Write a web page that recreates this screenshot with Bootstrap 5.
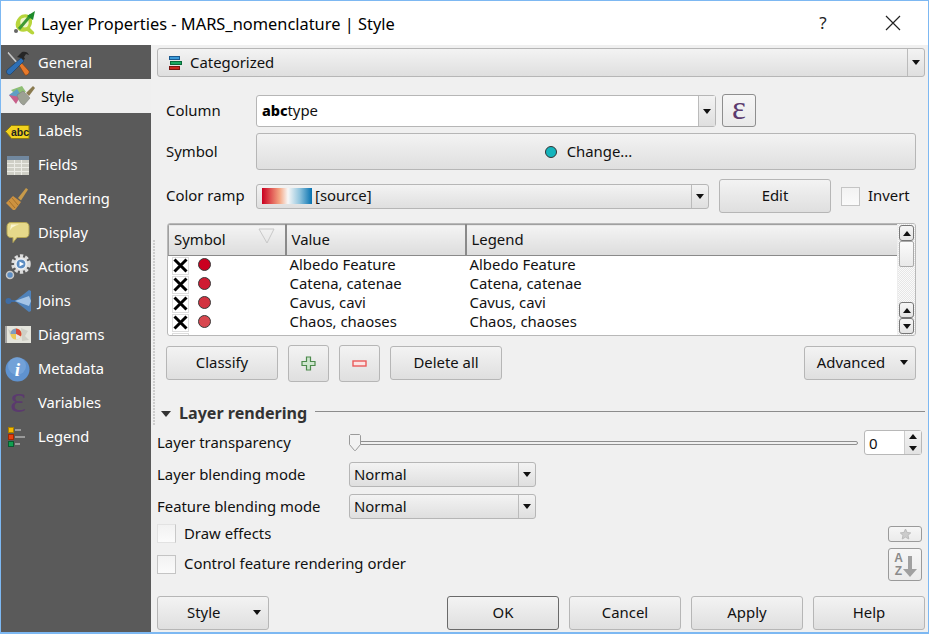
<!DOCTYPE html>
<html lang="en">
<head>
<meta charset="utf-8">
<title>Layer Properties</title>
<link href="https://cdn.jsdelivr.net/npm/bootstrap@5.3.0/dist/css/bootstrap.min.css" rel="stylesheet">
<style>
html,body{height:100%;margin:0;overflow:hidden}
body{background:#f0f0f0;font-family:"Noto Sans","Open Sans","Liberation Sans",sans-serif;font-size:14.9px;color:#111;line-height:1.2}
.win{width:929px;height:634px;border:1px solid #7db8f2;border-bottom-width:2px;display:flex;flex-direction:column;background:#f0f0f0}
.titlebar{height:44px;background:#fff;flex:none;padding-left:12px}
.titletext{font-size:16.4px;margin-left:4px;margin-top:1px;color:#000}
.winbtn{width:70px;height:44px;display:flex;align-items:center;justify-content:center;color:#222}
.qmark{font-size:17px}
.bodyarea{flex:1;min-height:0}
.side{width:150px;background:#5a5a5a;flex:none;border-radius:0}
.side .list-group-item{height:34px;background:#5a5a5a;border:0;color:#fff;padding:2px 0 0 4px;display:flex;align-items:center;gap:8px;border-radius:0;font-size:14.7px}
.side .list-group-item svg{flex:none;overflow:visible}
.side .list-group-item.sel{background:#efefef;color:#000;padding-left:7px;gap:8px}
.side .list-group-item .wd26{margin-right:-1px}
.side .list-group-item .wd28{margin-right:-3px}
.mainp{flex:1;min-width:0;padding:3px 3px 2px 6px;position:relative}
.mainp::before{content:"";position:absolute;left:2px;top:195px;height:185px;width:2px;background:repeating-linear-gradient(#cdcdcd 0 2px,transparent 2px 3px)}
.grad{background:linear-gradient(#f3f3f3,#dfdfdf);border:1px solid #b6b6b6;border-radius:3px;color:#111}
.qbtn{--bs-btn-padding-x:0;--bs-btn-padding-y:0;--bs-btn-font-size:14.9px;--bs-btn-line-height:1.2;--bs-btn-border-radius:3px;background:linear-gradient(#f3f3f3,#dfdfdf);border:1px solid #b6b6b6;color:#111;display:flex;align-items:center;justify-content:center;flex:none}
.qbtn:hover{background:linear-gradient(#f3f3f3,#dfdfdf);border-color:#b6b6b6;color:#111}
.w112{width:112px;height:34px}
.catcombo{height:29px;display:flex;align-items:center}
.catcombo .lbl{flex:1;padding-left:11px;display:flex;align-items:center;gap:8px}
.dropcell{width:17px;align-self:stretch;border-left:1px solid #bbb;display:flex;align-items:center;justify-content:center;flex:none}
.tri{width:0;height:0;border-left:4.5px solid transparent;border-right:4.5px solid transparent;border-top:5px solid #111;display:block}
.triup{border-top:0;border-bottom:5px solid #111}
.sect{padding:0 9px}
.flabel{width:90px;flex:none}
.r1{margin-top:17px;height:33px}
.colbox{width:460px;height:32px;margin-top:1px;background:#fff;border:1px solid #b6b6b6;border-radius:3px;display:flex;align-items:center}
.abc{font-weight:800;font-size:14.5px;margin-left:5px;letter-spacing:-.1px;color:#000}
.colbox .dropcell{background:linear-gradient(#f3f3f3,#dfdfdf)}
.epsbtn{width:34px;height:33px;margin-left:6px;border-color:#8e8e8e;background:linear-gradient(#f6f6f6,#e9e9e9)}
.eps{font-family:"Liberation Serif",serif;font-size:33px;color:#5b3a6e;line-height:24px;height:24px;margin-top:-6px}
.r2{margin-top:6px;height:37px}
.symbtn{width:660px;height:37px;gap:10px;padding-left:5px !important}
.dot{width:12px;height:12px;border-radius:50%;background:#14b4bc;border:1px solid #333;display:block;flex:none}
.r3{margin-top:9px;height:34px}
.rampcombo{width:453px;height:25px;display:flex;align-items:center}
.rampcombo .lbl{flex:1;display:flex;align-items:center;padding-left:5px;gap:3px}
.ramp{width:50px;height:16px;background:linear-gradient(90deg,#ca0020,#f4a582 35%,#f7f7f7 52%,#92c5de 75%,#0571b0);display:block}
.editbtn{margin-left:10px}
.chk{width:19px;height:19px;background:linear-gradient(#f2f2f2,#fbfbfb);border:1px solid #c4c4c4;display:block;flex:none}
.chk.faint{border-color:#e2e2e2 #c8c8c8 #e2e2e2 #e2e2e2}
.invert{margin-left:10px;gap:8px}
.tablewrap{margin-top:10px;margin-left:1px;height:113px;border:1px solid #b8b8b8;border-radius:3px;background:#fff;position:relative;overflow:hidden;display:flex}
.tscroll{flex:1;min-width:0;overflow:hidden}
.qtab{margin:0;width:730px;table-layout:fixed;--bs-table-bg:transparent;font-size:14.9px;color:#111}
.qtab th{height:31px;font-weight:400;padding:0 0 0 5px;background:linear-gradient(#f4f4f4,#dcdcdc);border:0;border-top:1px solid #a0a0a0;border-right:2px solid #8a8a8a;border-bottom:1px solid #8a8a8a;vertical-align:middle;position:relative}
.qtab th:first-child{border-left:1px solid #a0a0a0}
.qtab td{height:19px;padding:0;border:0;vertical-align:top;line-height:17px;background:#fff}
.cellwrap{display:flex;align-items:center;height:19px;padding-left:3px;gap:9px}
.xbox{width:17px;height:18px;background:#fff;border:1px solid #ddd;display:flex;align-items:center;justify-content:center;flex:none}
.swdot{width:13px;height:13px;border-radius:50%;border:1px solid #3a3a3a;display:block;margin-top:-3px}
.vcell{padding-left:4px !important}
.sortmark{position:absolute;right:10px;top:3px}
.sbar{width:18px;flex:none;display:flex;flex-direction:column;background:repeating-conic-gradient(#e6e6e6 0 25%,#fafafa 0 50%) 0 0/2px 2px;border-left:1px solid #eee;padding:1px}
.sb{height:16px;flex:none;background:linear-gradient(#f6f6f6,#e4e4e4);border:1px solid #777;border-radius:3px;display:flex;align-items:center;justify-content:center}
.sthumb{height:26px;flex:none;background:linear-gradient(#fbfbfb,#e9e9e9);border:1px solid #aaa;border-radius:2px}
.sfill{flex:1}
.r5{margin-top:9px;height:37px;align-items:flex-start}
.r5 .w112{margin-top:1px}
.smbtn{width:41px;height:37px}
.ml10{margin-left:10px}
.advbtn{padding-right:18px !important}
.r6{margin-top:20px;height:24px}
.secttitle{font-weight:700;font-size:16.1px;color:#333;margin:0 8px 0 8px;white-space:nowrap}
.secttri{margin-left:4px;border-left-width:5.5px;border-right-width:5.5px;border-top-width:6px;border-top-color:#333}
.sectline{flex:1;height:1px;background:#8c8c8c;margin-top:-5px}
.r7{margin-top:7px;height:25px}
.r6 + .r7{margin-top:4px}
.mr3{margin-right:3px}
.l192{width:192px;flex:none}
.slider{flex:1;position:relative;height:17px;display:flex;align-items:center;margin-right:6px}
.groove{display:block;width:100%;height:4px;border:1px solid #8f8f8f;border-radius:2px;background:#f0f0f0}
.handle{position:absolute;left:0;top:0}
.spin{width:58px;height:25px;background:#fff;border:1px solid #b8b8b8;border-radius:3px;display:flex;flex:none}
.spin .sv{flex:1;padding-left:4px;align-self:center;font-size:15px}
.spin .ss{width:17px;border-left:1px solid #ccc;display:flex;flex-direction:column;background:linear-gradient(#f3f3f3,#e2e2e2)}
.spin .ss i{flex:1;display:flex;align-items:center;justify-content:center}
.nbox{width:187px;height:25px;display:flex;align-items:center}
.nbox .lbl{flex:1;padding-left:4px}
.r10{margin-top:5px;height:19px}
.r11{margin-top:5px;height:33px}
.r11 .gapchk{margin-bottom:1px}
.gapchk{gap:8px}
.starbtn{width:34px;height:16px;margin-top:2px;background:linear-gradient(#f6f6f6,#ebebeb);border-color:#9a9a9a}
.azbtn{width:34px;height:33px;background:linear-gradient(#f6f6f6,#ebebeb);border-color:#9a9a9a}
.foot{margin-top:15px;height:34px;gap:10px}
.okbtn{border-color:#6a6a6a}
.stylebtn{justify-content:flex-start;padding-left:29px !important;position:relative}
.mtri{position:absolute;right:7px;top:13px}
</style>
</head>
<body>
<div class="win">
  <div class="titlebar d-flex align-items-center">
    <svg width="24" height="26" viewBox="0 0 24 26"><path d="M6 7c4-4 10-3 12 0 2 4 1 8-1 11l4 4c1 2-1 3-3 2l-4-3c-5 2-9 0-11-4-1-3 0-7 3-10z" fill="#b8d53c"/><path d="M8 9c3-2 6-2 7 0 1 3 1 6-1 8-3 1-5 0-6-2-1-2-1-4 0-6z" fill="#f1f6cf"/><path d="M6 19L18 5" stroke="#3f9a34" stroke-width="3"/><path d="M14 6l8-5-2 9z" fill="#1d8a2a"/><circle cx="3" cy="21" r="2" fill="#666"/></svg>
    <span class="titletext">Layer Properties - MARS_nomenclature | Style</span>
    <span class="ms-auto winbtn qmark">?</span>
    <span class="winbtn"><svg width="16" height="16" viewBox="0 0 16 16"><path d="M1 1l14 14M15 1L1 15" stroke="#222" stroke-width="1.2"/></svg></span>
  </div>
  <div class="bodyarea d-flex">
    <div class="side list-group list-group-flush">
      <div class="list-group-item">
        <svg width="25" height="25" viewBox="0 0 25 25"><path d="M2 2l1.500-1.500 9 10-1.500 2z" fill="#c4c4c4" stroke="#444" stroke-width=".6"/><path d="M12 11l2-2 10 11c1 2-2 5-4 4z" fill="#e8792a" stroke="#7a3c10" stroke-width=".6"/><path d="M12 6l5-5c3-1 6 0 7 3l-3-1-2 3 1 2-2 1-2-2z" fill="#262626"/><path d="M16 7l3 3L6 23c-2 2-6-1-4-4z" fill="#2e6fb5" stroke="#173a60" stroke-width=".6"/></svg>
        General</div>
      <div class="list-group-item sel">
        <svg class="wd26" width="26" height="26" viewBox="0 0 26 26"><path d="M3 6l11-4 4 6-9 4z" fill="#8fbf74"/><path d="M1 11l8-6 4 6-7 5z" fill="#5f9fc4"/><path d="M1 11l11 2-4 7z" fill="#c8608a"/><path d="M9 11l6-4 7 7-6 7c-3 0-6-6-7-10z" fill="#9da194" stroke="#777" stroke-width=".5"/><path d="M18 9l7-7 2 2-6 8z" fill="#8a7b50"/></svg>
        Style</div>
      <div class="list-group-item">
        <svg width="25" height="25" viewBox="0 0 25 25"><path d="M.5 12.500l6-6h17.500v13H6.500z" fill="#f2d21e" stroke="#8c7a10"/><text x="15" y="16.500" font-family="Liberation Sans" font-weight="700" font-size="10.5" fill="#222" text-anchor="middle">abc</text></svg>
        Labels</div>
      <div class="list-group-item">
        <svg width="25" height="25" viewBox="0 0 25 25"><rect x="2" y="3" width="22" height="19" fill="#cfcfc6"/><rect x="2" y="3" width="22" height="4" fill="#71889f"/><path d="M2 10.500h22M2 14.500h22M2 18.500h22M9.500 7v15M16.500 7v15" stroke="#ecece6"/></svg>
        Fields</div>
      <div class="list-group-item">
        <svg width="25" height="25" viewBox="0 0 25 25"><path d="M13 11l8-10 2 1.500-7 11z" fill="#c79a4a"/><path d="M8 9l8 6-6 8-2 0-7-7z" fill="#cd9240"/><path d="M4 14l6 7M7 11l6 7" stroke="#a5702a"/></svg>
        Rendering</div>
      <div class="list-group-item">
        <svg width="25" height="25" viewBox="0 0 25 25"><path d="M6 1.500h14c3 0 4 2 4 4v7c0 3-2 4-4 4h-8l-4 5v-5H6c-3 0-4-2-4-4v-7c0-2 1-4 4-4z" fill="#e6d98a" stroke="#b5a654"/><path d="M6 3.500h8c-3 1-7 2-9 6z" fill="#fbf6cf"/></svg>
        Display</div>
      <div class="list-group-item">
        <svg class="wd26" width="26" height="26" viewBox="0 0 26 26"><circle cx="16" cy="10" r="8" fill="none" stroke="#dcdcdc" stroke-width="3.5" stroke-dasharray="3.200 2"/><circle cx="16" cy="10" r="7" fill="#e4e4e4"/><circle cx="16" cy="10" r="5" fill="#5d8dc2" stroke="#fff"/><path d="M14.500 7.500l4.500 2.500-4.500 2.500z" fill="#fff"/><circle cx="5" cy="21" r="3.500" fill="#5d8dc2" stroke="#c8c8c8" stroke-width="1.500"/></svg>
        Actions</div>
      <div class="list-group-item">
        <svg class="wd28" width="28" height="25" viewBox="0 0 28 25"><circle cx="3.500" cy="12" r="3" fill="#3f6ca3"/><path d="M4 12h8" stroke="#3f6ca3" stroke-width="2"/><path d="M10 12L24 1l2 1v20l-2 1z" fill="#4f82ba"/><path d="M10 12L24 7l2 5-2 5z" fill="#a4c4e6"/></svg>
        Joins</div>
      <div class="list-group-item">
        <svg class="wd26" width="26" height="22" viewBox="0 0 26 22"><rect x="1" y="2" width="25" height="17" fill="#e4e4dc"/><path d="M1 2v17" stroke="#a5a5a5" stroke-width="2"/><path d="M16 4l7 3-3 5 4 4-7 1zM3 5l4 3-2 3z" fill="#cfcfc6"/><circle cx="11" cy="10" r="5.500" fill="#e9c85a"/><path d="M11 10V4.500a5.500 5.500 0 0 1 4.800 8z" fill="#d84a3a"/><path d="M11 10l4.800 2.500a5.500 5.500 0 0 1-4.800 3z" fill="#e7e7e7"/><path d="M11 10V4.500A5.500 5.500 0 0 0 5.500 10z" fill="#7f9cc0"/></svg>
        Diagrams</div>
      <div class="list-group-item">
        <svg width="25" height="25" viewBox="0 0 25 25"><circle cx="12.500" cy="12.500" r="12" fill="#5f92cf"/><circle cx="12" cy="9" r="9" fill="#7fabdd" opacity=".6"/><text x="12.500" y="19" font-family="Liberation Serif" font-style="italic" font-weight="700" font-size="19" fill="#fff" text-anchor="middle">i</text></svg>
        Metadata</div>
      <div class="list-group-item">
        <svg width="25" height="25" viewBox="0 0 25 25"><text x="13" y="21" font-family="Liberation Serif" font-size="38" fill="#5b3a6e" text-anchor="middle">ε</text></svg>
        Variables</div>
      <div class="list-group-item">
        <svg width="25" height="25" viewBox="0 0 25 25"><rect x="3.500" y="2.500" width="5" height="5" fill="#f5b800" stroke="#a88000"/><rect x="3.500" y="9.500" width="5" height="5" fill="#e84010" stroke="#a02800"/><rect x="3.500" y="16.500" width="5" height="5" fill="#10a050" stroke="#0a5a30"/><path d="M10 5h6M10 12h10M10 19h5" stroke="#9a9a9a" stroke-width="2"/></svg>
        Legend</div>
    </div>
    <div class="mainp d-flex flex-column">
      <div class="grad catcombo">
        <div class="lbl">
          <svg width="13" height="14" viewBox="0 0 13 14"><rect x=".5" y=".5" width="10" height="3" fill="#3a9ad9" stroke="#1a5a90"/><rect x="1.500" y="5.500" width="11" height="3" fill="#1aa860" stroke="#0a6a3a"/><rect x=".5" y="10.500" width="10" height="3" fill="#c8281e" stroke="#7a1610"/></svg>
          Categorized</div>
        <div class="dropcell"><span class="tri"></span></div>
      </div>
      <div class="sect">
        <div class="d-flex align-items-center r1">
          <span class="flabel">Column</span>
          <div class="colbox"><span class="abc">abc</span><span class="flex-grow-1">type</span><div class="dropcell"><span class="tri"></span></div></div>
          <button type="button" class="btn qbtn epsbtn"><span class="eps">ε</span></button>
        </div>
        <div class="d-flex align-items-center r2">
          <span class="flabel">Symbol</span>
          <button type="button" class="btn qbtn symbtn"><span class="dot"></span>Change...</button>
        </div>
        <div class="d-flex align-items-center r3">
          <span class="flabel">Color ramp</span>
          <div class="grad rampcombo"><div class="lbl"><span class="ramp"></span>[source]</div><div class="dropcell"><span class="tri"></span></div></div>
          <button type="button" class="btn qbtn w112 editbtn">Edit</button>
          <span class="d-flex align-items-center invert"><span class="chk"></span>Invert</span>
        </div>
        <div class="tablewrap">
          <div class="tscroll">
            <table class="table qtab">
              <colgroup><col style="width:117px"><col style="width:180px"><col style="width:433px"></colgroup>
              <thead><tr>
                <th>Symbol<svg class="sortmark" width="17" height="16" viewBox="0 0 17 16"><path d="M1 1h15L9 15z" fill="none" stroke="#c8c8c8"/></svg></th>
                <th>Value</th><th>Legend</th>
              </tr></thead>
              <tbody>
                <tr><td><div class="cellwrap"><span class="xbox"><svg width="15" height="15" viewBox="0 0 15 15"><path d="M1.500 1.500l12 12M13.500 1.500l-12 12" stroke="#000" stroke-width="3"/></svg></span><span class="swdot" style="background:#ca0020"></span></div></td><td class="vcell">Albedo Feature</td><td class="vcell">Albedo Feature</td></tr>
                <tr><td><div class="cellwrap"><span class="xbox"><svg width="15" height="15" viewBox="0 0 15 15"><path d="M1.500 1.500l12 12M13.500 1.500l-12 12" stroke="#000" stroke-width="3"/></svg></span><span class="swdot" style="background:#cf1b32"></span></div></td><td class="vcell">Catena, catenae</td><td class="vcell">Catena, catenae</td></tr>
                <tr><td><div class="cellwrap"><span class="xbox"><svg width="15" height="15" viewBox="0 0 15 15"><path d="M1.500 1.500l12 12M13.500 1.500l-12 12" stroke="#000" stroke-width="3"/></svg></span><span class="swdot" style="background:#d23240"></span></div></td><td class="vcell">Cavus, cavi</td><td class="vcell">Cavus, cavi</td></tr>
                <tr><td><div class="cellwrap"><span class="xbox"><svg width="15" height="15" viewBox="0 0 15 15"><path d="M1.500 1.500l12 12M13.500 1.500l-12 12" stroke="#000" stroke-width="3"/></svg></span><span class="swdot" style="background:#d8474f"></span></div></td><td class="vcell">Chaos, chaoses</td><td class="vcell">Chaos, chaoses</td></tr>
                <tr><td><div class="cellwrap"><span class="xbox"></span></div></td><td></td><td></td></tr>
              </tbody>
            </table>
          </div>
          <div class="sbar">
            <div class="sb"><span class="tri triup"></span></div>
            <div class="sthumb"></div>
            <div class="sfill"></div>
            <div class="sb"><span class="tri triup"></span></div>
            <div class="sb"><span class="tri"></span></div>
          </div>
        </div>
        <div class="d-flex r5">
          <button type="button" class="btn qbtn w112">Classify</button>
          <button type="button" class="btn qbtn smbtn ml10"><svg width="15" height="15" viewBox="0 0 15 15"><path d="M5.500 1h4v4.500H14v4H9.500V14h-4V9.500H1v-4h4.500z" fill="#cfe6cf" stroke="#4c8a4c" stroke-width="1.2"/></svg></button>
          <button type="button" class="btn qbtn smbtn ml10"><svg width="15" height="8" viewBox="0 0 15 8"><rect x="1" y="1" width="13" height="5" fill="#fbe4e4" stroke="#ea5a5a" stroke-width="1.4"/></svg></button>
          <button type="button" class="btn qbtn w112 ml10">Delete all</button>
          <button type="button" class="btn qbtn w112 ms-auto position-relative advbtn">Advanced<span class="tri mtri"></span></button>
        </div>
      </div>
      <div class="d-flex align-items-center r6">
        <span class="tri secttri"></span>
        <span class="secttitle">Layer rendering</span>
        <span class="sectline"></span>
      </div>
      <div class="d-flex align-items-center r7 mr3">
        <span class="l192">Layer transparency</span>
        <div class="slider"><span class="groove"></span>
          <svg class="handle" width="12" height="17" viewBox="0 0 12 17"><path d="M1.500.5h9l1 1v9l-5 6h-1l-5-6v-9z" fill="#f2f2f2" stroke="#9a9a9a"/></svg>
        </div>
        <div class="spin"><span class="sv">0</span><div class="ss"><i><span class="tri triup"></span></i><i><span class="tri"></span></i></div></div>
      </div>
      <div class="d-flex align-items-center r7">
        <span class="l192">Layer blending mode</span>
        <div class="grad nbox"><span class="lbl">Normal</span><div class="dropcell"><span class="tri"></span></div></div>
      </div>
      <div class="d-flex align-items-center r7">
        <span class="l192">Feature blending mode</span>
        <div class="grad nbox"><span class="lbl">Normal</span><div class="dropcell"><span class="tri"></span></div></div>
      </div>
      <div class="d-flex align-items-start r10 mr3">
        <span class="d-flex align-items-center gapchk"><span class="chk faint"></span>Draw effects</span>
        <button type="button" class="btn qbtn starbtn ms-auto"><svg width="13" height="12" viewBox="0 0 13 12"><path d="M6.500 1l1.600 3.500 3.600.4-2.700 2.400.8 3.700-3.300-1.900-3.300 1.900.8-3.700L1.300 4.900l3.600-.4z" fill="#ccc" stroke="#bbb"/></svg></button>
      </div>
      <div class="d-flex align-items-center r11 mr3">
        <span class="d-flex align-items-center gapchk"><span class="chk"></span>Control feature rendering order</span>
        <button type="button" class="btn qbtn azbtn ms-auto"><svg width="28" height="28" viewBox="0 0 28 28"><text x="7.500" y="11" font-family="Liberation Sans" font-weight="700" font-size="12" fill="#8a8a8a" text-anchor="middle">A</text><text x="7.500" y="24" font-family="Liberation Sans" font-weight="700" font-size="12" fill="#8a8a8a" text-anchor="middle">Z</text><path d="M17 5h4v13h5l-7 8-7-8h5z" fill="#a0a0a0"/></svg></button>
      </div>
      <div class="d-flex foot">
        <button type="button" class="btn qbtn w112 stylebtn">Style<span class="tri mtri"></span></button>
        <button type="button" class="btn qbtn w112 okbtn ms-auto">OK</button>
        <button type="button" class="btn qbtn w112">Cancel</button>
        <button type="button" class="btn qbtn w112">Apply</button>
        <button type="button" class="btn qbtn w112">Help</button>
      </div>
    </div>
  </div>
</div>
</body>
</html>
